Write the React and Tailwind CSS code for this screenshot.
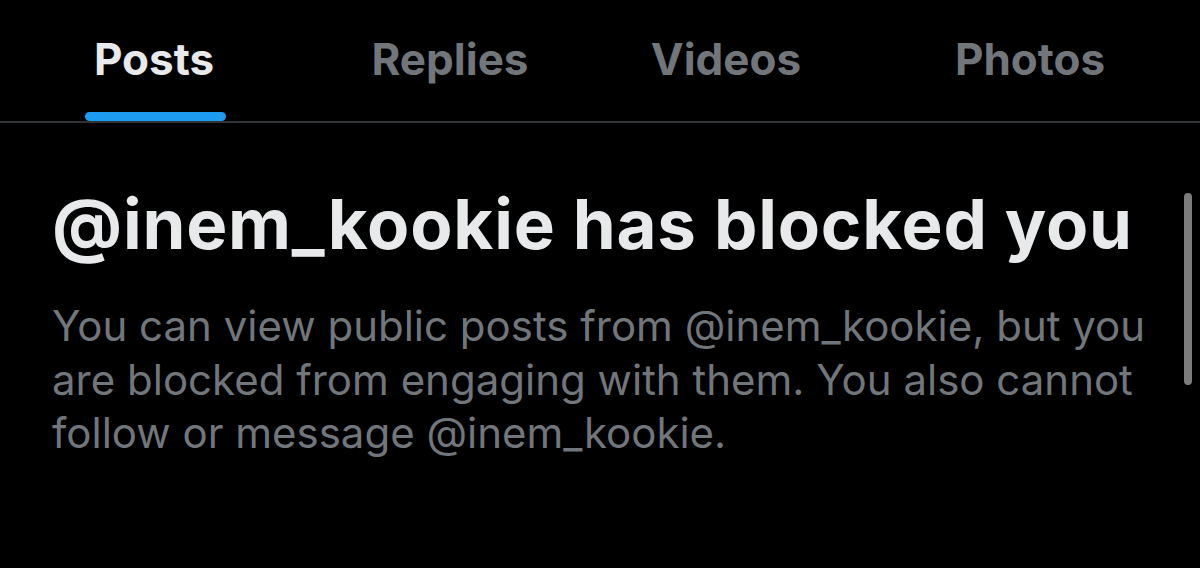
export default function App() {
  const tabs = [
    { label: 'Posts', w: 'w-[308px]', active: true },
    { label: 'Replies', w: 'w-[284px]' },
    { label: 'Videos', w: 'w-[268px]' },
    { label: 'Photos', w: 'flex-1' },
  ]
  return (
    <div className="relative w-[1200px] h-[568px] overflow-hidden bg-black font-['Inter','Liberation_Sans',sans-serif]">
      {/* Tabs */}
      <div className="flex h-[123px] border-b-2 border-[#2f3336]">
        {tabs.map((t) => (
          <div key={t.label} className={`${t.w} relative flex items-center justify-center`}>
            <span
              className={`text-[44px] font-bold pb-[3px] ${t.active ? 'text-[#e7e9ea]' : 'text-[#71767b]'}`}
            >
              {t.label}
            </span>
            {t.active && (
              <div className="absolute bottom-0 left-[85px] w-[141px] h-[9px] rounded-full bg-[#1d9bf0]" />
            )}
          </div>
        ))}
      </div>

      {/* Blocked message */}
      <div className="px-[52px] pt-[56px]">
        <h1 className="text-[69px] leading-[90px] font-bold tracking-[0.8px] text-[#e7e9ea] whitespace-nowrap">
          @inem_kookie has blocked you
        </h1>
        <p className="mt-[30px] text-[42px] leading-[53.5px] text-[#71767b] w-[1112px]">
          You can view public posts from @inem_kookie, but you are blocked from engaging with them. You also cannot
          follow or message @inem_kookie.
        </p>
      </div>

      {/* Scrollbar */}
      <div className="absolute left-[1184px] top-[193px] w-[8px] h-[192px] rounded-full bg-[#7c7c7c]" />
    </div>
  )
}
